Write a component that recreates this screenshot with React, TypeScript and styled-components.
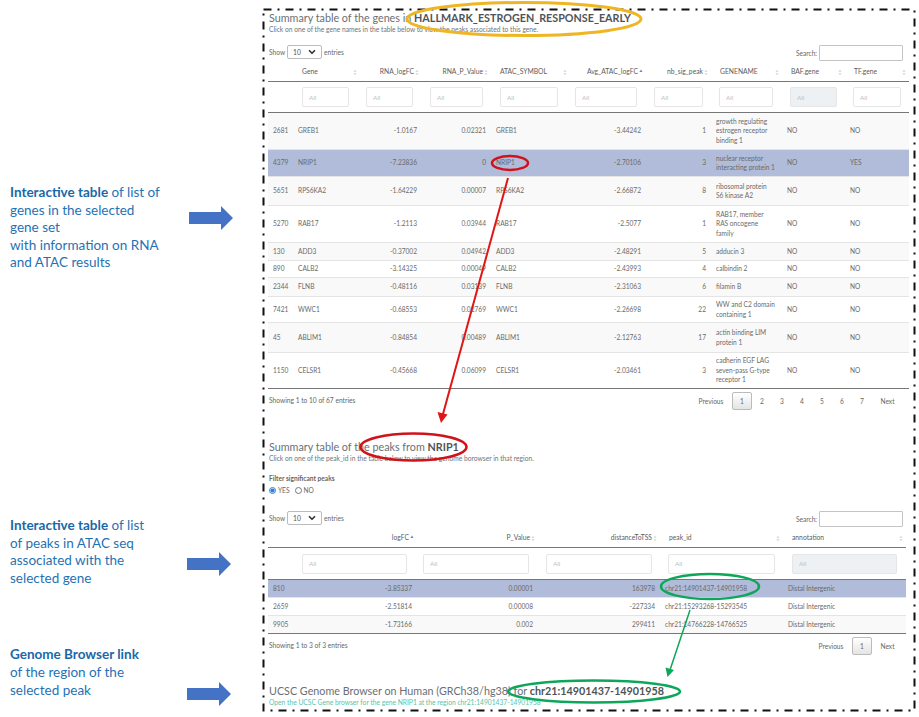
import React from 'react'
import styled, { createGlobalStyle } from 'styled-components'
import { ChevronDown } from 'lucide-react'

const GlobalStyle = createGlobalStyle`
  html, body {
    margin: 0;
    padding: 0;
    background: #fff;
  }
  * {
    box-sizing: border-box;
  }
`

const Page = styled.div`
  position: relative;
  display: flex;
  width: 919px;
  height: 717px;
  overflow: hidden;
  font-family: Lato, 'Open Sans', sans-serif;
`

const Sidebar = styled.aside`
  width: 263px;
  flex: none;
`

const Annotation = styled.div<{ $top: number }>`
  display: flex;
  align-items: flex-start;
  margin-top: ${(p) => p.$top}px;
  padding-left: 10px;
`

const Note = styled.p<{ $width: number }>`
  width: ${(p) => p.$width}px;
  flex: none;
  margin: 0;
  font-size: 13.5px;
  line-height: 17.6px;
  color: #1f72b4;

  b {
    font-weight: 700;
    color: #1a68a8;
  }
`

const BlockArrow = styled.svg<{ $top: number }>`
  flex: none;
  margin-top: ${(p) => p.$top}px;
`

const Main = styled.main`
  width: 652px;
  height: 702px;
  margin-top: 9px;
  padding: 1px 0 0 5px;
  color: #666;
`

const Title = styled.h2<{ $top?: number }>`
  height: 16px;
  margin: ${(p) => p.$top ?? 0}px 0 0 1px;
  font-size: 10.75px;
  font-weight: 400;
  line-height: 16px;
  color: #6a6f75;
  white-space: nowrap;

  b {
    font-weight: 700;
    color: #4f5458;
  }
`

const Hint = styled.p<{ $link?: boolean }>`
  height: 8px;
  margin: 0 0 0 1px;
  font-size: 6.7px;
  line-height: 7px;
  color: ${(p) => (p.$link ? '#58c4a8' : '#6f7478')};
  white-space: nowrap;
`

const FilterLabel = styled.div`
  height: 8px;
  margin: 11px 0 0 1px;
  font-size: 6.6px;
  font-weight: 700;
  line-height: 8px;
  color: #666;
`

const RadioRow = styled.div`
  display: flex;
  align-items: center;
  height: 10px;
  margin: 3px 0 0 1px;
  font-size: 6.6px;
  color: #666;
`

const RadioOption = styled.label`
  display: flex;
  align-items: center;
  gap: 2px;
  margin-right: 5px;
`

const Radio = styled.input.attrs({ type: 'radio', readOnly: true })`
  width: 7px;
  height: 7px;
  margin: 0;
  accent-color: #2f7ed8;
`

const Controls = styled.div<{ $top: number; $width: number }>`
  display: flex;
  align-items: flex-start;
  justify-content: space-between;
  width: ${(p) => p.$width}px;
  height: 15px;
  margin: ${(p) => p.$top}px 0 0 1px;
  font-size: 6.6px;
  color: #666;
`

const Length = styled.div`
  display: flex;
  align-items: center;
  gap: 2px;
  height: 14px;
`

const SelectBox = styled.div`
  display: flex;
  align-items: center;
  justify-content: space-between;
  width: 35px;
  height: 14px;
  padding: 0 4px 0 5px;
  border: 1px solid #bbb;
  border-radius: 2px;
  color: #555;
  font-size: 6.8px;
`

const Search = styled.div`
  display: flex;
  align-items: center;
  gap: 2px;
  height: 16px;
`

const SearchInput = styled.input`
  width: 84px;
  height: 16px;
  border: 1px solid #c4c4c4;
  border-radius: 1px;
  background: #fff;
  outline: none;
`

const Table = styled.table<{ $width: number }>`
  width: ${(p) => p.$width}px;
  border-collapse: separate;
  border-spacing: 0;
  table-layout: fixed;
  font-size: 6.6px;
  line-height: 9.5px;
  color: #6a6a6a;
`

const Th = styled.th`
  height: 22px;
  padding: 3px 3px 0 9px;
  border-bottom: 1.5px solid #777;
  font-size: 6.75px;
  font-weight: 400;
  color: #5c5c5c;
`

const HeadInner = styled.div<{ $right?: boolean }>`
  display: flex;
  align-items: center;
  justify-content: ${(p) => (p.$right ? 'flex-end' : 'space-between')};
  gap: 1px;
`

const FilterCell = styled.td<{ $left: number; $right: number; $height: number }>`
  height: ${(p) => p.$height}px;
  padding: 0 ${(p) => p.$right}px 0 ${(p) => p.$left}px;
  border-bottom: 1.5px solid #777;
`

const FilterInput = styled.input`
  display: block;
  width: 100%;
  height: 20px;
  padding: 0 6px;
  border: 1px solid #e6e6e6;
  border-radius: 2px;
  background: #fff;
  font-family: inherit;
  font-size: 6.4px;
  outline: none;

  &::placeholder {
    color: #c0c0c0;
  }

  &:disabled {
    background: #eef1f3;
  }
`

const Row = styled.tr<{ $height: number; $striped: boolean; $selected: boolean }>`
  height: ${(p) => p.$height}px;
  background: ${(p) => (p.$selected ? '#b0bcd9' : p.$striped ? '#f9f9f9' : '#fff')};
`

const Td = styled.td<{ $right?: boolean; $last?: boolean }>`
  padding: 0 5px;
  border-bottom: 1px solid ${(p) => (p.$last ? '#777' : '#e4e4e4')};
  text-align: ${(p) => (p.$right ? 'right' : 'left')};
  white-space: pre-line;
  overflow: hidden;
`

const Footer = styled.div<{ $width: number }>`
  display: flex;
  align-items: flex-start;
  justify-content: space-between;
  width: ${(p) => p.$width}px;
  height: 21px;
  padding-top: 3px;
  font-size: 6.65px;
  color: #666;
`

const Info = styled.span`
  margin: 4px 0 0 1px;
`

const Pager = styled.div`
  display: flex;
  align-items: center;
  height: 18px;
`

const PageLink = styled.span<{ $wide?: boolean; $current?: boolean }>`
  width: ${(p) => (p.$wide ? '31px' : '20px')};
  height: 18px;
  border: ${(p) => (p.$current ? '1px solid #bbb' : '1px solid transparent')};
  border-radius: 2px;
  background: ${(p) => (p.$current ? 'linear-gradient(#fff, #e4e4e4)' : 'transparent')};
  font-size: 6.6px;
  line-height: 16px;
  text-align: center;
  color: #666;
`

const PrevLink = styled(PageLink)`
  width: 42px;
`

const Overlay = styled.svg`
  position: absolute;
  top: 0;
  left: 0;
  pointer-events: none;
`

type Column = {
  label: string
  width: number
  right?: boolean
  sorted?: boolean
  inLeft: number
  inRight: number
  disabled?: boolean
  noFilter?: boolean
}

type DataRow = { height: number; selected?: boolean; cells: string[] }

const geneColumns: Column[] = [
  { label: '', width: 25, inLeft: 0, inRight: 0, noFilter: true },
  { label: 'Gene', width: 67, inLeft: 9, inRight: 11 },
  { label: 'RNA_logFC', width: 62, right: true, inLeft: 6, inRight: 9 },
  { label: 'RNA_P_Value', width: 69, right: true, inLeft: 8, inRight: 8 },
  { label: 'ATAC_SYMBOL', width: 79, inLeft: 9, inRight: 12 },
  { label: 'Avg_ATAC_logFC', width: 76, right: true, sorted: true, inLeft: 5, inRight: 9 },
  { label: 'nb_sig_peak', width: 65, right: true, inLeft: 8, inRight: 8 },
  { label: 'GENENAME', width: 71, inLeft: 8, inRight: 9 },
  { label: 'BAF.gene', width: 63, inLeft: 8, inRight: 8, disabled: true },
  { label: 'TF.gene', width: 64, inLeft: 8, inRight: 8 },
]

const geneRows: DataRow[] = [
  { height: 37, cells: ['2681', 'GREB1', '-1.0167', '0.02321', 'GREB1', '-3.44242', '1', 'growth regulating\nestrogen receptor\nbinding 1', 'NO', 'NO'] },
  { height: 27, selected: true, cells: ['4379', 'NRIP1', '-7.23836', '0', 'NRIP1', '-2.70106', '3', 'nuclear receptor\ninteracting protein 1', 'NO', 'YES'] },
  { height: 29, cells: ['5651', 'RPS6KA2', '-1.64229', '0.00007', 'RPS6KA2', '-2.66872', '8', 'ribosomal protein\nS6 kinase A2', 'NO', 'NO'] },
  { height: 37, cells: ['5270', 'RAB17', '-1.2113', '0.03944', 'RAB17', '-2.5077', '1', 'RAB17, member\nRAS oncogene\nfamily', 'NO', 'NO'] },
  { height: 18, cells: ['130', 'ADD3', '-0.37002', '0.04942', 'ADD3', '-2.48291', '5', 'adducin 3', 'NO', 'NO'] },
  { height: 17, cells: ['890', 'CALB2', '-3.14325', '0.00049', 'CALB2', '-2.43993', '4', 'calbindin 2', 'NO', 'NO'] },
  { height: 19, cells: ['2344', 'FLNB', '-0.48116', '0.03139', 'FLNB', '-2.31063', '6', 'filamin B', 'NO', 'NO'] },
  { height: 26, cells: ['7421', 'WWC1', '-0.68553', '0.02769', 'WWC1', '-2.26698', '22', 'WW and C2 domain\ncontaining 1', 'NO', 'NO'] },
  { height: 30, cells: ['45', 'ABLIM1', '-0.84854', '0.00489', 'ABLIM1', '-2.12763', '17', 'actin binding LIM\nprotein 1', 'NO', 'NO'] },
  { height: 36, cells: ['1150', 'CELSR1', '-0.45668', '0.06099', 'CELSR1', '-2.03461', '3', 'cadherin EGF LAG\nseven-pass G-type\nreceptor 1', 'NO', 'NO'] },
]

const peakColumns: Column[] = [
  { label: '', width: 25, inLeft: 0, inRight: 0, noFilter: true },
  { label: 'logFC', width: 124, right: true, sorted: true, inLeft: 9, inRight: 10 },
  { label: 'P_Value', width: 121, right: true, inLeft: 6, inRight: 9 },
  { label: 'distanceToTSS', width: 122, right: true, inLeft: 8, inRight: 8 },
  { label: 'peak_id', width: 123, inLeft: 8, inRight: 8 },
  { label: 'annotation', width: 123, inLeft: 9, inRight: 9, disabled: true },
]

const peakRows: DataRow[] = [
  { height: 18, selected: true, cells: ['810', '-3.85337', '0.00001', '163978', 'chr21:14901437-14901958', 'Distal Intergenic'] },
  { height: 18, cells: ['2659', '-2.51814', '0.00008', '-227334', 'chr21:15293268-15293545', 'Distal Intergenic'] },
  { height: 18, cells: ['9905', '-1.73166', '0.002', '299411', 'chr21:14766228-14766525', 'Distal Intergenic'] },
]

const SortIcon: React.FC<{ active?: boolean }> = ({ active }) => (
  <svg width="4" height="7" viewBox="0 0 4 7" style={{ flex: 'none' }}>
    <path d="M2 0.5 L3.6 3 H0.4 Z" fill={active ? '#6f86c4' : '#dcdcdc'} />
    {!active && <path d="M2 6.5 L3.6 4 H0.4 Z" fill="#dcdcdc" />}
  </svg>
)

const DataTable: React.FC<{
  columns: Column[]
  rows: DataRow[]
  width: number
  filterHeight: number
}> = ({ columns, rows, width, filterHeight }) => (
  <Table $width={width}>
    <colgroup>
      {columns.map((c, i) => (
        <col key={i} width={c.width} />
      ))}
    </colgroup>
    <thead>
      <tr>
        {columns.map((c, i) => (
          <Th key={i}>
            {c.label && (
              <HeadInner $right={c.right}>
                <span>{c.label}</span>
                <SortIcon active={c.sorted} />
              </HeadInner>
            )}
          </Th>
        ))}
      </tr>
      <tr>
        {columns.map((c, i) => (
          <FilterCell key={i} $left={c.inLeft} $right={c.inRight} $height={filterHeight}>
            {!c.noFilter && <FilterInput placeholder="All" disabled={c.disabled} />}
          </FilterCell>
        ))}
      </tr>
    </thead>
    <tbody>
      {rows.map((r, i) => (
        <Row key={i} $height={r.height} $striped={i % 2 === 0} $selected={!!r.selected}>
          {r.cells.map((cell, j) => (
            <Td key={j} $right={columns[j].right} $last={i === rows.length - 1}>
              {cell}
            </Td>
          ))}
        </Row>
      ))}
    </tbody>
  </Table>
)

const TableControls: React.FC<{ top: number; width: number }> = ({ top, width }) => (
  <Controls $top={top} $width={width}>
    <Length>
      Show
      <SelectBox>
        10
        <ChevronDown size={10} strokeWidth={4} color="#333" />
      </SelectBox>
      entries
    </Length>
    <Search>
      Search:
      <SearchInput />
    </Search>
  </Controls>
)

const BlueArrow: React.FC<{ top: number }> = ({ top }) => (
  <BlockArrow $top={top} width="44" height="24" viewBox="0 0 44 24">
    <polygon points="0,6 32,6 32,0 44,12 32,24 32,18 0,18" fill="#4472c4" />
  </BlockArrow>
)

const App: React.FC = () => (
  <Page>
    <GlobalStyle />
    <Sidebar>
      <Annotation $top={184}>
        <Note $width={179}>
          <b>Interactive table</b> of list of
          <br />
          genes in the selected
          <br />
          gene set
          <br />
          with information on RNA
          <br />
          and ATAC results
        </Note>
        <BlueArrow top={22} />
      </Annotation>
      <Annotation $top={245}>
        <Note $width={177}>
          <b>Interactive table</b> of list
          <br />
          of peaks in ATAC seq
          <br />
          associated with the
          <br />
          selected gene
        </Note>
        <BlueArrow top={35} />
      </Annotation>
      <Annotation $top={59}>
        <Note $width={177}>
          <b>Genome Browser link</b>
          <br />
          of the region of the
          <br />
          selected peak
        </Note>
        <BlueArrow top={36} />
      </Annotation>
    </Sidebar>

    <Main>
      <Title>
        Summary table of the genes in <b>HALLMARK_ESTROGEN_RESPONSE_EARLY</b>
      </Title>
      <Hint>Click on one of the gene names in the table below to view the peaks associated to this gene.</Hint>
      <TableControls top={11} width={634} />
      <DataTable columns={geneColumns} rows={geneRows} width={641} filterHeight={31} />
      <Footer $width={635}>
        <Info>Showing 1 to 10 of 67 entries</Info>
        <Pager>
          <PrevLink>Previous</PrevLink>
          <PageLink $current>1</PageLink>
          <PageLink>2</PageLink>
          <PageLink>3</PageLink>
          <PageLink>4</PageLink>
          <PageLink>5</PageLink>
          <PageLink>6</PageLink>
          <PageLink>7</PageLink>
          <PageLink $wide>Next</PageLink>
        </Pager>
      </Footer>

      <Title $top={29}>
        Summary table of the peaks from <b>NRIP1</b>
      </Title>
      <Hint>Click on one of the peak_id in the table below to view the genome borowser in that region.</Hint>
      <FilterLabel>Filter significant peaks</FilterLabel>
      <RadioRow>
        <RadioOption>
          <Radio name="significant" defaultChecked />
          YES
        </RadioOption>
        <RadioOption>
          <Radio name="significant" />
          NO
        </RadioOption>
      </RadioRow>
      <TableControls top={16} width={634} />
      <DataTable columns={peakColumns} rows={peakRows} width={638} filterHeight={32} />
      <Footer $width={635}>
        <Info>Showing 1 to 3 of 3 entries</Info>
        <Pager>
          <PrevLink>Previous</PrevLink>
          <PageLink $current>1</PageLink>
          <PageLink $wide>Next</PageLink>
        </Pager>
      </Footer>

      <Title $top={28}>
        UCSC Genome Browser on Human (GRCh38/hg38) for <b>chr21:14901437-14901958</b>
      </Title>
      <Hint $link>Open the UCSC Gene browser for the gene NRIP1 at the region chr21:14901437-14901958</Hint>
    </Main>

    <Overlay width="919" height="717" viewBox="0 0 919 717" fill="none">
      <rect x="263.5" y="9.5" width="651" height="701" stroke="#111" strokeWidth="2" strokeDasharray="8 6 2 6" />
      <ellipse cx="524" cy="19" rx="117" ry="16.5" stroke="#efb522" strokeWidth="3" />
      <ellipse cx="510" cy="163" rx="18" ry="7" stroke="#d0121b" strokeWidth="2.5" />
      <line x1="508" y1="178" x2="443" y2="414" stroke="#e01515" strokeWidth="2" />
      <polygon points="441,423 437.5,412 447.5,414.5" fill="#e01515" />
      <ellipse cx="413.5" cy="447" rx="53" ry="13.5" stroke="#d0121b" strokeWidth="2.5" />
      <ellipse cx="710" cy="586.5" rx="49" ry="12.5" stroke="#0ea65a" strokeWidth="2.5" />
      <line x1="690" y1="610" x2="670" y2="670" stroke="#0ea65a" strokeWidth="1.5" />
      <polygon points="667.5,677 665.5,667.5 674,670" fill="#0ea65a" />
      <ellipse cx="594" cy="691.5" rx="86" ry="11" stroke="#0ea65a" strokeWidth="2.5" />
    </Overlay>
  </Page>
)

export default App
